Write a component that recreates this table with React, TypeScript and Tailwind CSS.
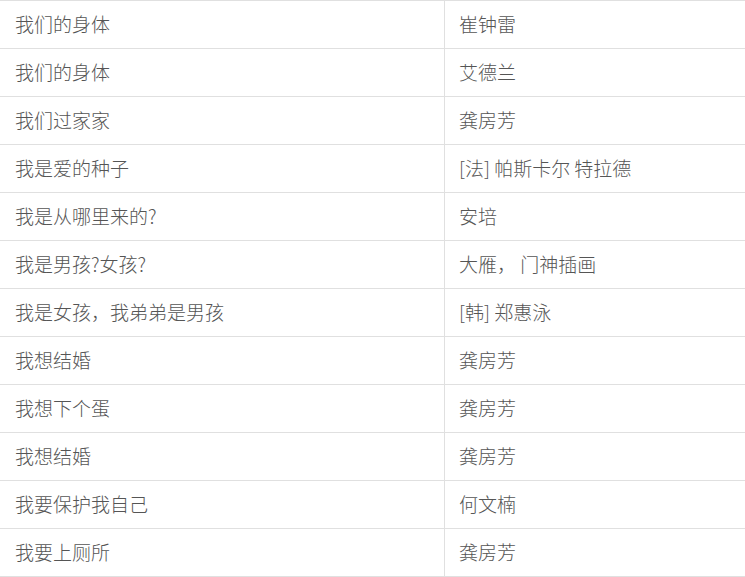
import React from 'react';

const rows: [string, string][] = [
  ['我们的身体', '崔钟雷'],
  ['我们的身体', '艾德兰'],
  ['我们过家家', '龚房芳'],
  ['我是爱的种子', '[法] 帕斯卡尔 特拉德'],
  ['我是从哪里来的?', '安培'],
  ['我是男孩?女孩?', '大雁， 门神插画'],
  ['我是女孩，我弟弟是男孩', '[韩] 郑惠泳'],
  ['我想结婚', '龚房芳'],
  ['我想下个蛋', '龚房芳'],
  ['我想结婚', '龚房芳'],
  ['我要保护我自己', '何文楠'],
  ['我要上厕所', '龚房芳'],
];

const App: React.FC = () => {
  return (
    <div
      className="w-[745px] bg-white text-[19px] font-light text-[#555]"
      style={{ fontFamily: '"Noto Sans CJK SC", "Noto Sans", sans-serif' }}
    >
      <div className="border-b border-[#e0e0e0]">
        {rows.map(([title, author], i) => (
          <div key={i} className="flex h-[48px] border-t border-[#e0e0e0]">
            <div className="w-[445px] flex items-center pl-[15px] border-r border-[#e0e0e0]">
              {title}
            </div>
            <div className="flex-1 flex items-center pl-[14px]">{author}</div>
          </div>
        ))}
      </div>
    </div>
  );
};

export default App;
